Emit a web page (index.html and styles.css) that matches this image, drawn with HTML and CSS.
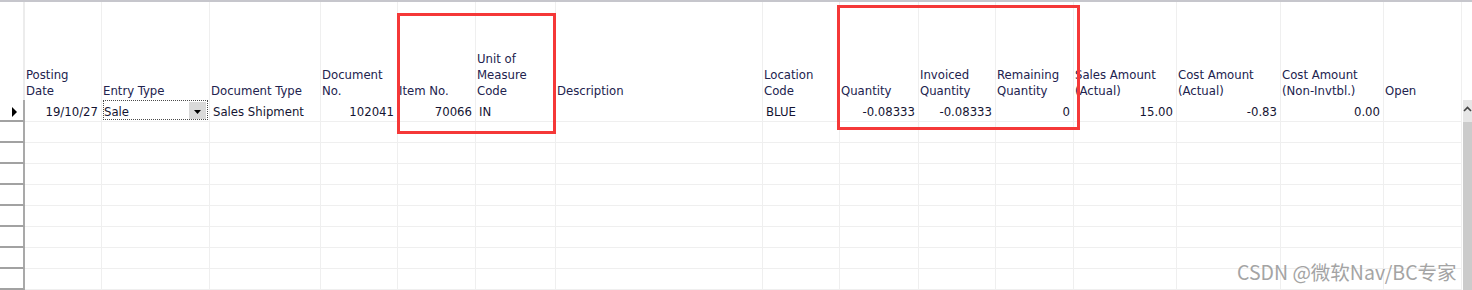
FILE: index.html
```html
<!DOCTYPE html>
<html lang="en">
<head>
<meta charset="utf-8">
<title>Item Ledger Entries</title>
<link rel="stylesheet" href="styles.css">
</head>
<body>
<div class="page">
  <div class="grid">
    <div class="hdr">
      <div class="sel"></div>
      <div class="hc">Posting<br>Date</div>
      <div class="hc">Entry Type</div>
      <div class="hc">Document Type</div>
      <div class="hc">Document<br>No.</div>
      <div class="hc">Item No.</div>
      <div class="hc">Unit of<br>Measure<br>Code</div>
      <div class="hc">Description</div>
      <div class="hc">Location<br>Code</div>
      <div class="hc">Quantity</div>
      <div class="hc">Invoiced<br>Quantity</div>
      <div class="hc">Remaining<br>Quantity</div>
      <div class="hc">Sales Amount<br>(Actual)</div>
      <div class="hc">Cost Amount<br>(Actual)</div>
      <div class="hc">Cost Amount<br>(Non-Invtbl.)</div>
      <div class="hc">Open</div>
      <div class="hgap"></div>
    </div>
    <div class="body">
      <div class="rows">
        <div class="row current">
          <div class="sel"><svg class="ptr" width="5" height="10" viewBox="0 0 5 10"><polygon points="0,0 5,5 0,10" fill="#000"/></svg></div>
          <div class="c r">19/10/27</div>
          <div class="c focus"><div class="combo"><span class="combo-text">Sale</span><span class="combo-btn"><svg width="7" height="4" viewBox="0 0 7 4"><polygon points="0,0 7,0 3.5,4" fill="#000"/></svg></span></div></div>
          <div class="c">Sales Shipment</div>
          <div class="c r">102041</div>
          <div class="c r">70066</div>
          <div class="c">IN</div>
          <div class="c"></div>
          <div class="c">BLUE</div>
          <div class="c r">-0.08333</div>
          <div class="c r">-0.08333</div>
          <div class="c r">0</div>
          <div class="c r">15.00</div>
          <div class="c r">-0.83</div>
          <div class="c r">0.00</div>
          <div class="c"></div>
        </div>
        <div class="row"><div class="sel"></div><div class="c"></div><div class="c"></div><div class="c"></div><div class="c"></div><div class="c"></div><div class="c"></div><div class="c"></div><div class="c"></div><div class="c"></div><div class="c"></div><div class="c"></div><div class="c"></div><div class="c"></div><div class="c"></div><div class="c"></div></div>
        <div class="row"><div class="sel"></div><div class="c"></div><div class="c"></div><div class="c"></div><div class="c"></div><div class="c"></div><div class="c"></div><div class="c"></div><div class="c"></div><div class="c"></div><div class="c"></div><div class="c"></div><div class="c"></div><div class="c"></div><div class="c"></div><div class="c"></div></div>
        <div class="row"><div class="sel"></div><div class="c"></div><div class="c"></div><div class="c"></div><div class="c"></div><div class="c"></div><div class="c"></div><div class="c"></div><div class="c"></div><div class="c"></div><div class="c"></div><div class="c"></div><div class="c"></div><div class="c"></div><div class="c"></div><div class="c"></div></div>
        <div class="row"><div class="sel"></div><div class="c"></div><div class="c"></div><div class="c"></div><div class="c"></div><div class="c"></div><div class="c"></div><div class="c"></div><div class="c"></div><div class="c"></div><div class="c"></div><div class="c"></div><div class="c"></div><div class="c"></div><div class="c"></div><div class="c"></div></div>
        <div class="row"><div class="sel"></div><div class="c"></div><div class="c"></div><div class="c"></div><div class="c"></div><div class="c"></div><div class="c"></div><div class="c"></div><div class="c"></div><div class="c"></div><div class="c"></div><div class="c"></div><div class="c"></div><div class="c"></div><div class="c"></div><div class="c"></div></div>
        <div class="row"><div class="sel"></div><div class="c"></div><div class="c"></div><div class="c"></div><div class="c"></div><div class="c"></div><div class="c"></div><div class="c"></div><div class="c"></div><div class="c"></div><div class="c"></div><div class="c"></div><div class="c"></div><div class="c"></div><div class="c"></div><div class="c"></div></div>
        <div class="row"><div class="sel"></div><div class="c"></div><div class="c"></div><div class="c"></div><div class="c"></div><div class="c"></div><div class="c"></div><div class="c"></div><div class="c"></div><div class="c"></div><div class="c"></div><div class="c"></div><div class="c"></div><div class="c"></div><div class="c"></div><div class="c"></div></div>
        <div class="row"><div class="sel"></div><div class="c"></div><div class="c"></div><div class="c"></div><div class="c"></div><div class="c"></div><div class="c"></div><div class="c"></div><div class="c"></div><div class="c"></div><div class="c"></div><div class="c"></div><div class="c"></div><div class="c"></div><div class="c"></div><div class="c"></div></div>
        <div class="row"><div class="sel"></div><div class="c"></div><div class="c"></div><div class="c"></div><div class="c"></div><div class="c"></div><div class="c"></div><div class="c"></div><div class="c"></div><div class="c"></div><div class="c"></div><div class="c"></div><div class="c"></div><div class="c"></div><div class="c"></div><div class="c"></div></div>
      </div>
      <div class="vscroll">
        <div class="vs-up"><svg width="9" height="8" viewBox="0 0 9 8"><polyline points="1,6 4.5,2.5 8,6" fill="none" stroke="#444" stroke-width="1.6"/></svg></div>
        <div class="vs-thumb"></div>
      </div>
    </div>
  </div>
  <div class="mark mark-a"></div>
  <div class="mark mark-b"></div>
  <div class="watermark">CSDN @微软Nav/BC专家</div>
</div>
</body>
</html>
```
FILE: styles.css
```css
html, body {
  margin: 0;
  padding: 0;
  background: #ffffff;
}

body {
  width: 1472px;
  height: 290px;
  overflow: hidden;
  font-family: "DejaVu Sans Condensed", "DejaVu Sans", sans-serif;
  font-size: 13px;
}

*, *::before, *::after {
  box-sizing: border-box;
}

.page {
  position: relative;
  width: 1472px;
  height: 290px;
  overflow: hidden;
  --cols: 25px 77px 108px 111px 77px 78px 80px 207px 77px 79px 77px 78px 103px 104px 103px 78px;
}

.grid {
  border-top: 2px solid #c6c6cc;
}

/* header */
.hdr {
  display: grid;
  grid-template-columns: var(--cols) 10px;
  height: 98px;
}

.hdr .sel {
  border-right: 2px solid #ececec;
}

.hc {
  border-right: 1px solid #efefef;
  display: flex;
  flex-direction: column;
  justify-content: flex-end;
  padding: 0 0 1px 1px;
  line-height: 16px;
  color: #22224e;
  white-space: nowrap;
}

/* body */
.body {
  display: flex;
}

.rows {
  width: 1462px;
}

.row {
  display: grid;
  grid-template-columns: var(--cols);
  height: 21px;
}

.row.current {
  height: 22px;
}

.row .sel {
  border-right: 2px solid #a9a9a9;
  border-bottom: 2px solid #a2a2a2;
  display: flex;
  align-items: center;
  padding-left: 12px;
}

.ptr {
  display: block;
  margin-top: 3px;
}

.c {
  border-right: 1px solid #efefef;
  border-bottom: 1px solid #efefef;
  display: flex;
  align-items: center;
  padding: 0 3px 0 3px;
  color: #141432;
  white-space: nowrap;
  line-height: 16px;
}

.current .c {
  padding-top: 3px;
}

.c.r {
  justify-content: flex-end;
}

.current .c.focus {
  padding: 0 1px;
  align-items: flex-start;
}

.combo {
  display: flex;
  width: 105px;
  height: 20px;
  border: 1px dotted #4a4a4a;
  align-items: stretch;
}

.combo-text {
  flex: 1;
  display: flex;
  align-items: center;
  padding-top: 3px;
}

.combo-btn {
  width: 17px;
  margin: 1px 1px 0 0;
  background: #d9d9d9;
  display: flex;
  align-items: center;
  justify-content: center;
  padding-top: 2px;
}

.combo-btn svg {
  display: block;
}

/* scrollbar */
.vscroll {
  width: 10px;
  display: flex;
  flex-direction: column;
  padding-left: 1px;
  height: 190px;
}

.vs-up {
  height: 22px;
  background: #e6e6e6;
  padding-top: 5px;
}

.vs-up svg {
  display: block;
}

.vs-thumb {
  flex: 1;
  background: #cbcbcb;
}

/* overlays */
.mark {
  position: absolute;
  border: 3px solid #f53838;
}

.mark-a {
  left: 397px;
  top: 13px;
  width: 159px;
  height: 121px;
}

.mark-b {
  left: 837px;
  top: 5px;
  width: 243px;
  height: 125px;
}

.watermark {
  position: absolute;
  left: 1237px;
  top: 261px;
  font-family: "Noto Sans CJK SC", "Noto Sans", sans-serif;
  font-size: 19.5px;
  line-height: 21px;
  color: #a4a4a4;
  white-space: nowrap;
}
```
